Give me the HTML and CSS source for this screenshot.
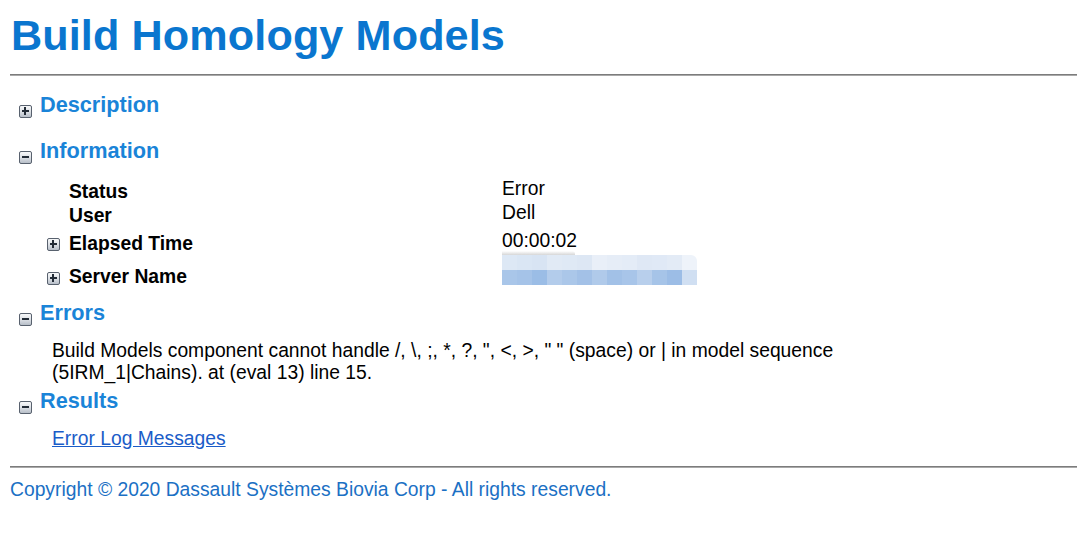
FILE: index.html
```html
<!DOCTYPE html>
<html lang="en">
<head>
<meta charset="utf-8">
<title>Build Homology Models</title>
<link rel="stylesheet" href="styles.css">
</head>
<body>
<div class="page">
  <h1 class="title">Build Homology Models</h1>
  <hr class="rule rule-top">

  <section class="sec sec-desc">
    <div class="sec-head"><span class="tg plus"></span><h2 class="sec-title">Description</h2></div>
  </section>

  <section class="sec sec-info">
    <div class="sec-head"><span class="tg minus"></span><h2 class="sec-title">Information</h2></div>
    <div class="info">
      <div class="row row-status">
        <div class="ico"></div>
        <div class="lbl">Status</div>
        <div class="val">Error</div>
      </div>
      <div class="row row-user">
        <div class="ico"></div>
        <div class="lbl">User</div>
        <div class="val">Dell</div>
      </div>
      <div class="row row-elapsed">
        <div class="ico"><span class="tg plus"></span></div>
        <div class="lbl">Elapsed Time</div>
        <div class="val">00:00:02</div>
      </div>
      <div class="row row-server">
        <div class="ico"><span class="tg plus"></span></div>
        <div class="lbl">Server Name</div>
        <div class="val">
          <div class="blur">
            <div class="blur-top"></div>
            <div class="blur-row light"><i></i><i></i><i></i><i></i><i></i><i></i><i></i><i></i><i></i><i></i><i></i><i></i><i></i></div>
            <div class="blur-row dark"><i></i><i></i><i></i><i></i><i></i><i></i><i></i><i></i><i></i><i></i><i></i><i></i><i></i></div>
          </div>
        </div>
      </div>
    </div>
  </section>

  <section class="sec sec-errors">
    <div class="sec-head"><span class="tg minus"></span><h2 class="sec-title">Errors</h2></div>
    <p class="msg">Build Models component cannot handle /, \, ;, *, ?, ", &lt;, &gt;, " " (space) or | in model sequence<br>(5IRM_1|Chains). at (eval 13) line 15.</p>
  </section>

  <section class="sec sec-results">
    <div class="sec-head"><span class="tg minus"></span><h2 class="sec-title">Results</h2></div>
    <p class="links"><a class="log-link" href="#">Error Log Messages</a></p>
  </section>

  <hr class="rule rule-bottom">
  <p class="copyright">Copyright © 2020 Dassault Systèmes Biovia Corp - All rights reserved.</p>
</div>
</body>
</html>
```
FILE: styles.css
```css
html, body {
  margin: 0;
  padding: 0;
  background: #ffffff;
}

body {
  font-family: "Liberation Sans", Arial, sans-serif;
  font-size: 19.3px;
  color: #000000;
}

.page {
  padding: 10px 0 0 10px;
}

.title {
  margin: 0 0 0 1px;
  font-size: 43.2px;
  line-height: 50px;
  font-weight: bold;
  color: #0a76cf;
  letter-spacing: 0.1px;
}

.rule {
  margin: 0;
  height: 0;
  border: 0;
  border-top: 1px solid #7c7c7c;
  border-bottom: 1px solid #a9a9a9;
}

.rule-top {
  margin-top: 14px;
}

.sec-head {
  display: flex;
  align-items: flex-start;
  padding-left: 9px;
  height: 26px;
}

.sec-title {
  margin: 0 0 0 8px;
  font-size: 21.7px;
  line-height: 26px;
  font-weight: bold;
  color: #1a84d8;
}

.sec-head .tg {
  margin-top: 13px;
}

.sec-desc { margin-top: 16px; }
.sec-info { margin-top: 20px; }
.sec-errors { margin-top: 11px; }
.sec-results { margin-top: 4px; }

/* toggle icons */
.tg {
  position: relative;
  display: block;
  flex: none;
  box-sizing: border-box;
  width: 13px;
  height: 13px;
  border: 1px solid #58616e;
  border-radius: 2px;
  background: linear-gradient(#f7f8f9 0%, #dde1e6 50%, #b7bec8 100%);
}

.tg::before {
  content: "";
  position: absolute;
  left: 2px;
  right: 2px;
  top: 4px;
  height: 2px;
  background: #222b36;
}

.tg.plus::after {
  content: "";
  position: absolute;
  top: 1px;
  bottom: 2px;
  left: 4px;
  width: 2px;
  background: #222b36;
}

/* information grid */
.info {
  margin: 14px 0 0 37px;
  display: flex;
  flex-direction: column;
}

.row {
  display: grid;
  grid-template-columns: 22px 433px 1fr;
  font-size: 19.3px;
  line-height: 22px;
}

.row-status { height: 24px; }
.row-user { height: 28px; }
.row-elapsed { height: 33px; }
.row-server { height: 26px; }

.ico .tg {
  margin-top: 8px;
}

.row-server .ico .tg {
  margin-top: 9px;
}

.lbl {
  padding-top: 3px;
  font-weight: bold;
}

.val {
  padding-top: 0;
}

.blur {
  margin-top: -12px;
  width: 195px;
  display: flex;
  flex-direction: column;
}

.blur-top {
  width: 73px;
  height: 4px;
  background: linear-gradient(#ffffff, #d6d6d6);
  border-radius: 0 3px 0 0;
}

.blur-row {
  display: flex;
  height: 15px;
}

.blur-row i {
  display: block;
  width: 15px;
  height: 15px;
}

.blur-row.light i:nth-child(1) { background: #dde8f5; }
.blur-row.light i:nth-child(2) { background: #dae6f4; }
.blur-row.light i:nth-child(3) { background: #d8e4f3; }
.blur-row.light i:nth-child(4) { background: #e1eaf5; }
.blur-row.light i:nth-child(5) { background: #dfe9f5; }
.blur-row.light i:nth-child(6) { background: #dde7f4; }
.blur-row.light i:nth-child(7) { background: #e9eff8; }
.blur-row.light i:nth-child(8) { background: #e6edf7; }
.blur-row.light i:nth-child(9) { background: #e4ecf7; }
.blur-row.light i:nth-child(10) { background: #dfe8f5; }
.blur-row.light i:nth-child(11) { background: #e0e9f6; }
.blur-row.light i:nth-child(12) { background: #e3ebf6; }
.blur-row.light i:nth-child(13) { background: #eef3fa; border-radius: 0 6px 0 0; }

.blur-row.dark i:nth-child(1) { background: #a9c6e9; }
.blur-row.dark i:nth-child(2) { background: #a5c3e8; }
.blur-row.dark i:nth-child(3) { background: #9bbde6; }
.blur-row.dark i:nth-child(4) { background: #b3cceb; }
.blur-row.dark i:nth-child(5) { background: #abc7e9; }
.blur-row.dark i:nth-child(6) { background: #a3c1e7; }
.blur-row.dark i:nth-child(7) { background: #b0caea; }
.blur-row.dark i:nth-child(8) { background: #a2c1e7; }
.blur-row.dark i:nth-child(9) { background: #a8c5e9; }
.blur-row.dark i:nth-child(10) { background: #b8cfec; }
.blur-row.dark i:nth-child(11) { background: #a6c4e8; }
.blur-row.dark i:nth-child(12) { background: #9cbde6; }
.blur-row.dark i:nth-child(13) { background: #d0dff2; }

/* errors */
.msg {
  margin: 14px 0 0 42px;
  font-size: 19.3px;
  line-height: 22px;
  color: #000000;
}

.links {
  margin: 14px 0 0 42px;
  font-size: 19.3px;
  line-height: 22px;
}

.log-link {
  color: #1a5cc8;
  text-decoration: underline;
}

.rule-bottom {
  margin-top: 16px;
}

.copyright {
  margin: 11px 0 0 0;
  font-size: 19.3px;
  line-height: 22px;
  color: #1b70c4;
}
```
